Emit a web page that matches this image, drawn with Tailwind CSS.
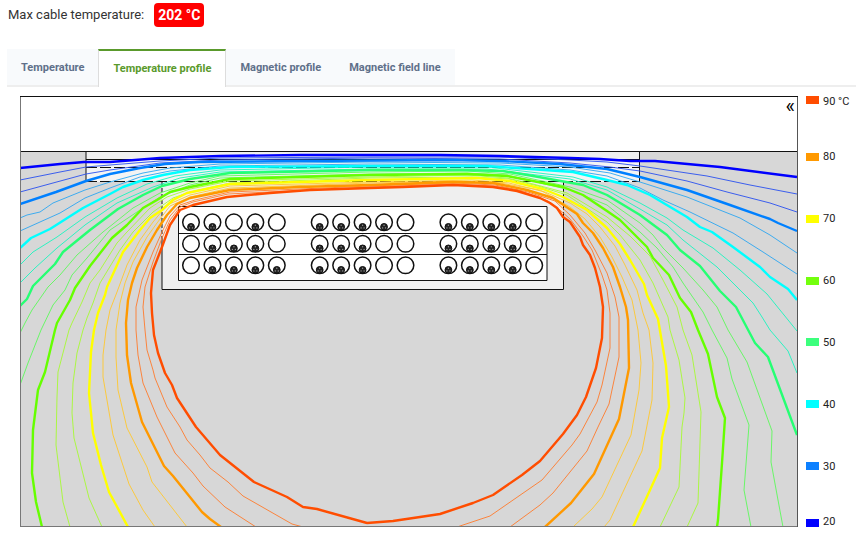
<!DOCTYPE html>
<html lang="en">
<head>
    <meta charset="UTF-8">
    <meta name="viewport" content="width=device-width, initial-scale=1.0">
    <title>Temperature profile</title>
    <script src="https://cdn.jsdelivr.net/npm/@tailwindcss/browser@4"></script>
</head>
<body class="bg-white font-['Roboto',sans-serif] text-[#333]">

    <p class="flex items-center gap-2.5 pl-2 pt-[3px] text-[13px] leading-6">
        <span>Max cable temperature:</span>
        <strong class="rounded bg-[#ff0000] px-1 text-sm leading-6 font-bold text-white">202 °C</strong>
    </p>

    <nav class="mt-[22px] ml-[7px] flex h-[38px] text-[11px] font-bold text-[#5f708a]" aria-label="Results">
        <div class="flex bg-[#f8fafc]">
            <a href="#temperature" class="flex items-center border-b-2 border-[#eee] px-3.5 pt-0.5">Temperature</a>
            <a href="#temperature-profile" aria-current="page" class="flex items-center border-x border-t-2 border-x-[#ddd] border-t-[#5a9a2c] bg-white px-3.5 text-[#5a9a2c]">Temperature profile</a>
            <a href="#magnetic-profile" class="flex items-center border-b-2 border-[#eee] px-3.5 pt-0.5">Magnetic profile</a>
            <a href="#magnetic-field-line" class="flex items-center border-b-2 border-[#eee] px-3.5 pt-0.5">Magnetic field line</a>
        </div>
        <div class="flex-1 border-b-2 border-[#eee]"></div>
    </nav>

    <main class="flex gap-2 pt-[9px] pl-5">
        <div class="relative flex-1">
            <svg class="block w-full" viewBox="20 96 778 431" fill="none" role="img" aria-label="Temperature contours around the cable trench">
                <!-- ground and trench -->
                <rect x="20" y="151" width="778" height="376" fill="#d7d7d7"/>
                <rect x="86" y="152" width="554" height="8" fill="#efefef"/>
                <rect x="86" y="160" width="554" height="22" fill="#f4f4f4"/>
                <rect x="162" y="182" width="401" height="107" fill="#efefef"/>
                <g stroke="#111">
                    <path d="M20 151.500H798M86 151V182M639.500 151V182M86 159.500H640"/>
                    <path d="M86 167.500H640M86 181.500H640" stroke-dasharray="11 3"/>
                    <path d="M162 182V240M563.500 182V220" stroke-dasharray="4 2"/>
                    <path d="M162 240V289.500H563.500V220"/>
                    <path d="M178.500 206.500H547V280.500H178.500ZM178 233.500H547M178 254.500H547" fill="#fff"/>
                </g>

                <g id="ducts" stroke="#111"></g>

                <!-- intermediate isotherms -->
                <g stroke-width="0.900">
                    <g stroke="#2950ef">
                        <polyline points="20,180 60,172 86,167 110,165 160,161 220,158 370,157 500,157 570,160 607,162 640,166 707,176 750,185 797,194"/>
                        <polyline points="20,192 86,174 110,170 160,163 220,160 370,158 500,159 570,163 610,167 640,171 687,181 727,192 770,203 797,212"/>
                    </g>
                    <g stroke="#2ba6f2">
                        <polyline points="20,218 27,215 40,212 53,203 85,190 110,182 143,173 170,168 220,164 370,162 500,163 570,167 610,173 640,182 687,197 740,218 770,235 797,253"/>
                        <polyline points="20,231 60,213 85,198 110,188 140,177 170,171 220,166 370,164 500,165 570,170 607,176 640,188 663,200 690,212 733,233 763,252 797,274"/>
                    </g>
                    <g stroke="#19f5be">
                        <polyline points="20,265 33,252 57,237 85,217 117,198 147,184 175,176 220,170 370,167 487,167 573,177 607,187 640,203 667,218 683,230 713,248 740,270 767,294 797,331"/>
                        <polyline points="20,283 35,268 57,248 85,225 117,203 153,187 180,178 220,172 370,169 487,169 570,179 607,190 640,209 667,225 683,240 717,267 753,303 762,317 770,330 788,351 797,373"/>
                    </g>
                    <g stroke="#5cf95a">
                        <polyline points="20,333 25,323 32,310 48,287 60,275 77,255 103,232 133,208 160,193 190,183 220,176 370,172 467,171 510,174 570,187 607,200 640,223 653,235 663,248 683,268 703,290 717,307 728,330 747,362 772,431 771,462 783,527"/>
                        <polyline points="20,385 28,363 41,330 53,305 65,290 72,275 87,258 110,230 137,212 160,197 190,185 220,178 370,174 467,173 507,175 570,190 607,205 640,232 657,248 673,267 683,283 703,312 712,330 727,358 732,379 749,425 744,490 751,527"/>
                    </g>
                    <g stroke="#a6fa32">
                        <polyline points="70,527 63,502 56,445 57,397 58,372 69,330 72,323 82,302 90,283 100,270 117,243 127,232 150,208 167,197 190,189 230,181 370,177 467,175 507,178 533,184 567,193 607,217 630,236 650,256 663,280 677,307 683,330 692,355 701,412 698,503 687,527"/>
                        <polyline points="102,527 89,498 74,438 72,413 73,383 77,353 83,330 87,318 93,303 100,283 120,250 133,232 153,212 173,198 190,192 230,183 370,178 472,177 509,179 538,186 567,195 607,222 620,235 640,260 653,283 668,317 670,330 679,360 685,398 684,413 682,427 679,487 660,527"/>
                    </g>
                    <g stroke="#ffc72e">
                        <polyline points="155,527 143,510 129,484 113,435 103,377 103,355 106,330 110,310 117,292 127,265 140,240 153,222 167,205 190,195 230,186 370,182 472,180 509,183 545,192 570,203 587,214 600,227 615,246 625,265 637,290 643,313 649,330 653,363 652,400 642,451 610,520 604,527"/>
                        <polyline points="187,527 152,482 147,467 127,428 118,390 116,357 116,330 120,303 125,283 133,262 147,237 157,223 170,206 190,197 230,188 370,183 462,181 500,183 540,190 570,207 585,219 600,237 612,257 622,277 632,300 638,330 641,363 639,390 631,435 602,497 592,509 573,527"/>
                    </g>
                    <g stroke="#ff7b2b">
                        <polyline points="256,527 225,507 203,486 193,473 175,453 157,417 143,383 138,355 136,330 136,307 142,280 153,252 162,232 170,216 180,205 195,200 230,192 370,186 453,183 495,185 528,192 555,201 570,215 585,233 595,250 607,273 615,297 619,317 619,357 609,404 598,427 587,451 553,493 540,505 510,527"/>
                        <polyline points="303,527 292,524 243,496 228,482 210,468 200,455 187,440 180,427 167,407 155,378 153,370 147,350 145,330 143,307 145,287 153,262 162,238 170,220 180,207 193,202 228,194 370,187 453,184 494,186 518,190 548,201 560,210 570,219 583,236 592,250 602,275 607,290 610,313 610,348 602,385 597,402 580,434 572,445 542,480 490,516 457,527"/>
                    </g>
                </g>

                <!-- main isotherms, 20 to 90 degrees -->
                <g stroke-width="2.400" stroke-linejoin="round">
                    <polyline stroke="#0000ff" points="20,168 60,164 84,162 110,162 160,158 220,156 300,155 440,155 500,156 570,158 600,159 630,161 655,161 720,167 797,177"/>
                    <polyline stroke="#0080ff" points="20,204 56,192 86,181 110,174 140,168 165,164 200,162 300,161 450,160 500,161 560,164 607,169 640,177 687,190 730,205 770,219 778,223 797,231"/>
                    <polyline stroke="#00ffff" points="20,248 31,238 50,229 83,208 110,194 123,187 143,180 163,175 190,170 230,167 370,166 487,166 573,172 607,180 627,185 650,195 687,217 700,227 712,232 733,247 760,267 770,277 788,289 797,300"/>
                    <polyline stroke="#26ff73" points="20,306 27,299 33,286 55,264 63,252 90,230 118,209 143,195 162,186 190,179 230,173 370,170 460,170 503,171 533,176 583,185 607,195 640,215 667,235 680,250 700,266 720,291 736,307 755,343 768,357 797,435"/>
                    <polyline stroke="#66ff00" points="42,527 36,502 32,473 33,430 38,390 45,372 55,330 57,323 70,300 75,288 90,266 112,238 127,225 143,208 157,200 170,192 190,187 230,179 370,175 467,174 507,176 533,181 563,187 583,195 607,211 620,220 630,230 647,247 653,258 669,275 680,298 691,312 698,330 708,354 717,397 725,418 722,463 718,520 717,527"/>
                    <polyline stroke="#ffff00" points="128,527 109,492 101,465 93,433 89,393 91,352 94,330 98,313 105,295 107,287 118,263 123,252 140,230 150,218 162,210 173,200 187,193 230,184 370,180 477,178 510,181 543,189 563,197 587,210 607,228 620,244 630,260 644,284 647,295 658,319 666,366 669,407 662,438 660,468 650,490 633,527"/>
                    <polyline stroke="#ff9900" points="221,527 210,519 202,512 173,476 164,466 142,422 131,383 127,355 126,323 128,300 132,283 137,268 147,247 157,230 167,215 177,204 190,198 210,194 230,190 300,187 370,185 453,182 493,183 527,190 553,198 577,214 583,223 593,233 603,248 613,267 620,287 626,307 628,320 629,368 619,419 594,474 571,503 545,527"/>
                    <polyline stroke="#ff4d00" points="367,523 317,509 303,507 287,497 254,482 220,455 196,427 177,398 172,385 165,373 158,353 154,335 152,313 151,293 153,270 162,247 170,225 180,210 193,205 227,197 270,193 310,190 370,188 403,187 453,185 493,187 517,191 540,198 550,203 557,208 563,217 570,222 580,237 583,245 590,255 595,268 600,287 603,307 602,338 596,368 586,397 577,415 563,434 540,461 522,475 493,495 473,503 440,514 420,517 393,521 367,523"/>
                </g>

                <path d="M20.500 96V527" stroke="#777"/>
                <path d="M20 526.500H798" stroke="#777"/>
                <path d="M797.500 96V527" stroke="#555"/>
                <path d="M20 96.500H798" stroke="#111"/>
            </svg>
            <button type="button" aria-label="Collapse legend" class="absolute top-0 right-[3px] text-xl leading-[21px] text-black">«</button>
        </div>

        <ul class="flex w-[50px] flex-col text-[11px] leading-none whitespace-nowrap text-[#222]">
            <li class="flex h-[30px] items-start gap-1"><span class="h-2 w-[13px] bg-[#ff4d00]"></span>90 °C</li>
            <li class="flex flex-1 items-center gap-1"><span class="h-2 w-[13px] bg-[#ff9900]"></span>80</li>
            <li class="flex flex-1 items-center gap-1"><span class="h-2 w-[13px] bg-[#ffff00]"></span>70</li>
            <li class="flex flex-1 items-center gap-1"><span class="h-2 w-[13px] bg-[#73ff0d]"></span>60</li>
            <li class="flex flex-1 items-center gap-1"><span class="h-2 w-[13px] bg-[#3cff7d]"></span>50</li>
            <li class="flex flex-1 items-center gap-1"><span class="h-2 w-[13px] bg-[#00ffff]"></span>40</li>
            <li class="flex flex-1 items-center gap-1"><span class="h-2 w-[13px] bg-[#0d80ff]"></span>30</li>
            <li class="flex h-[30px] items-end gap-1"><span class="h-2 w-[13px] bg-[#0000ff]"></span>20</li>
        </ul>
    </main>

    <script>
        // 1 = duct with a cable, 0 = empty duct
        const rows = [
            '11010 11110 11110',
            '01110 11100 11110',
            '01111 11100 11110'
        ];
        let ducts = '';

        rows.forEach((row, r) => {
            [...row].forEach((duct, c) => {
                if (duct === ' ') return;
                const x = 191 + c * 21.45;
                const y = 222.3 + r * 21.5;
                ducts += `<circle cx="${x}" cy="${y}" r="8.300" fill="#fff" stroke-width="1.500"/>`;
                if (duct === '1') {
                    ducts += `<circle cx="${x}" cy="${y + 4.6}" r="3.400" fill="#222"/>`;
                    // three conductors inside the cable
                    [[0, -1.7], [-1.5, 1], [1.5, 1]].forEach(([dx, dy]) => {
                        ducts += `<circle cx="${x + dx}" cy="${y + 4.6 + dy}" r="0.700" fill="#999" stroke="none"/>`;
                    });
                }
            });
        });

        document.getElementById('ducts').innerHTML = ducts;
    </script>

</body>
</html>
